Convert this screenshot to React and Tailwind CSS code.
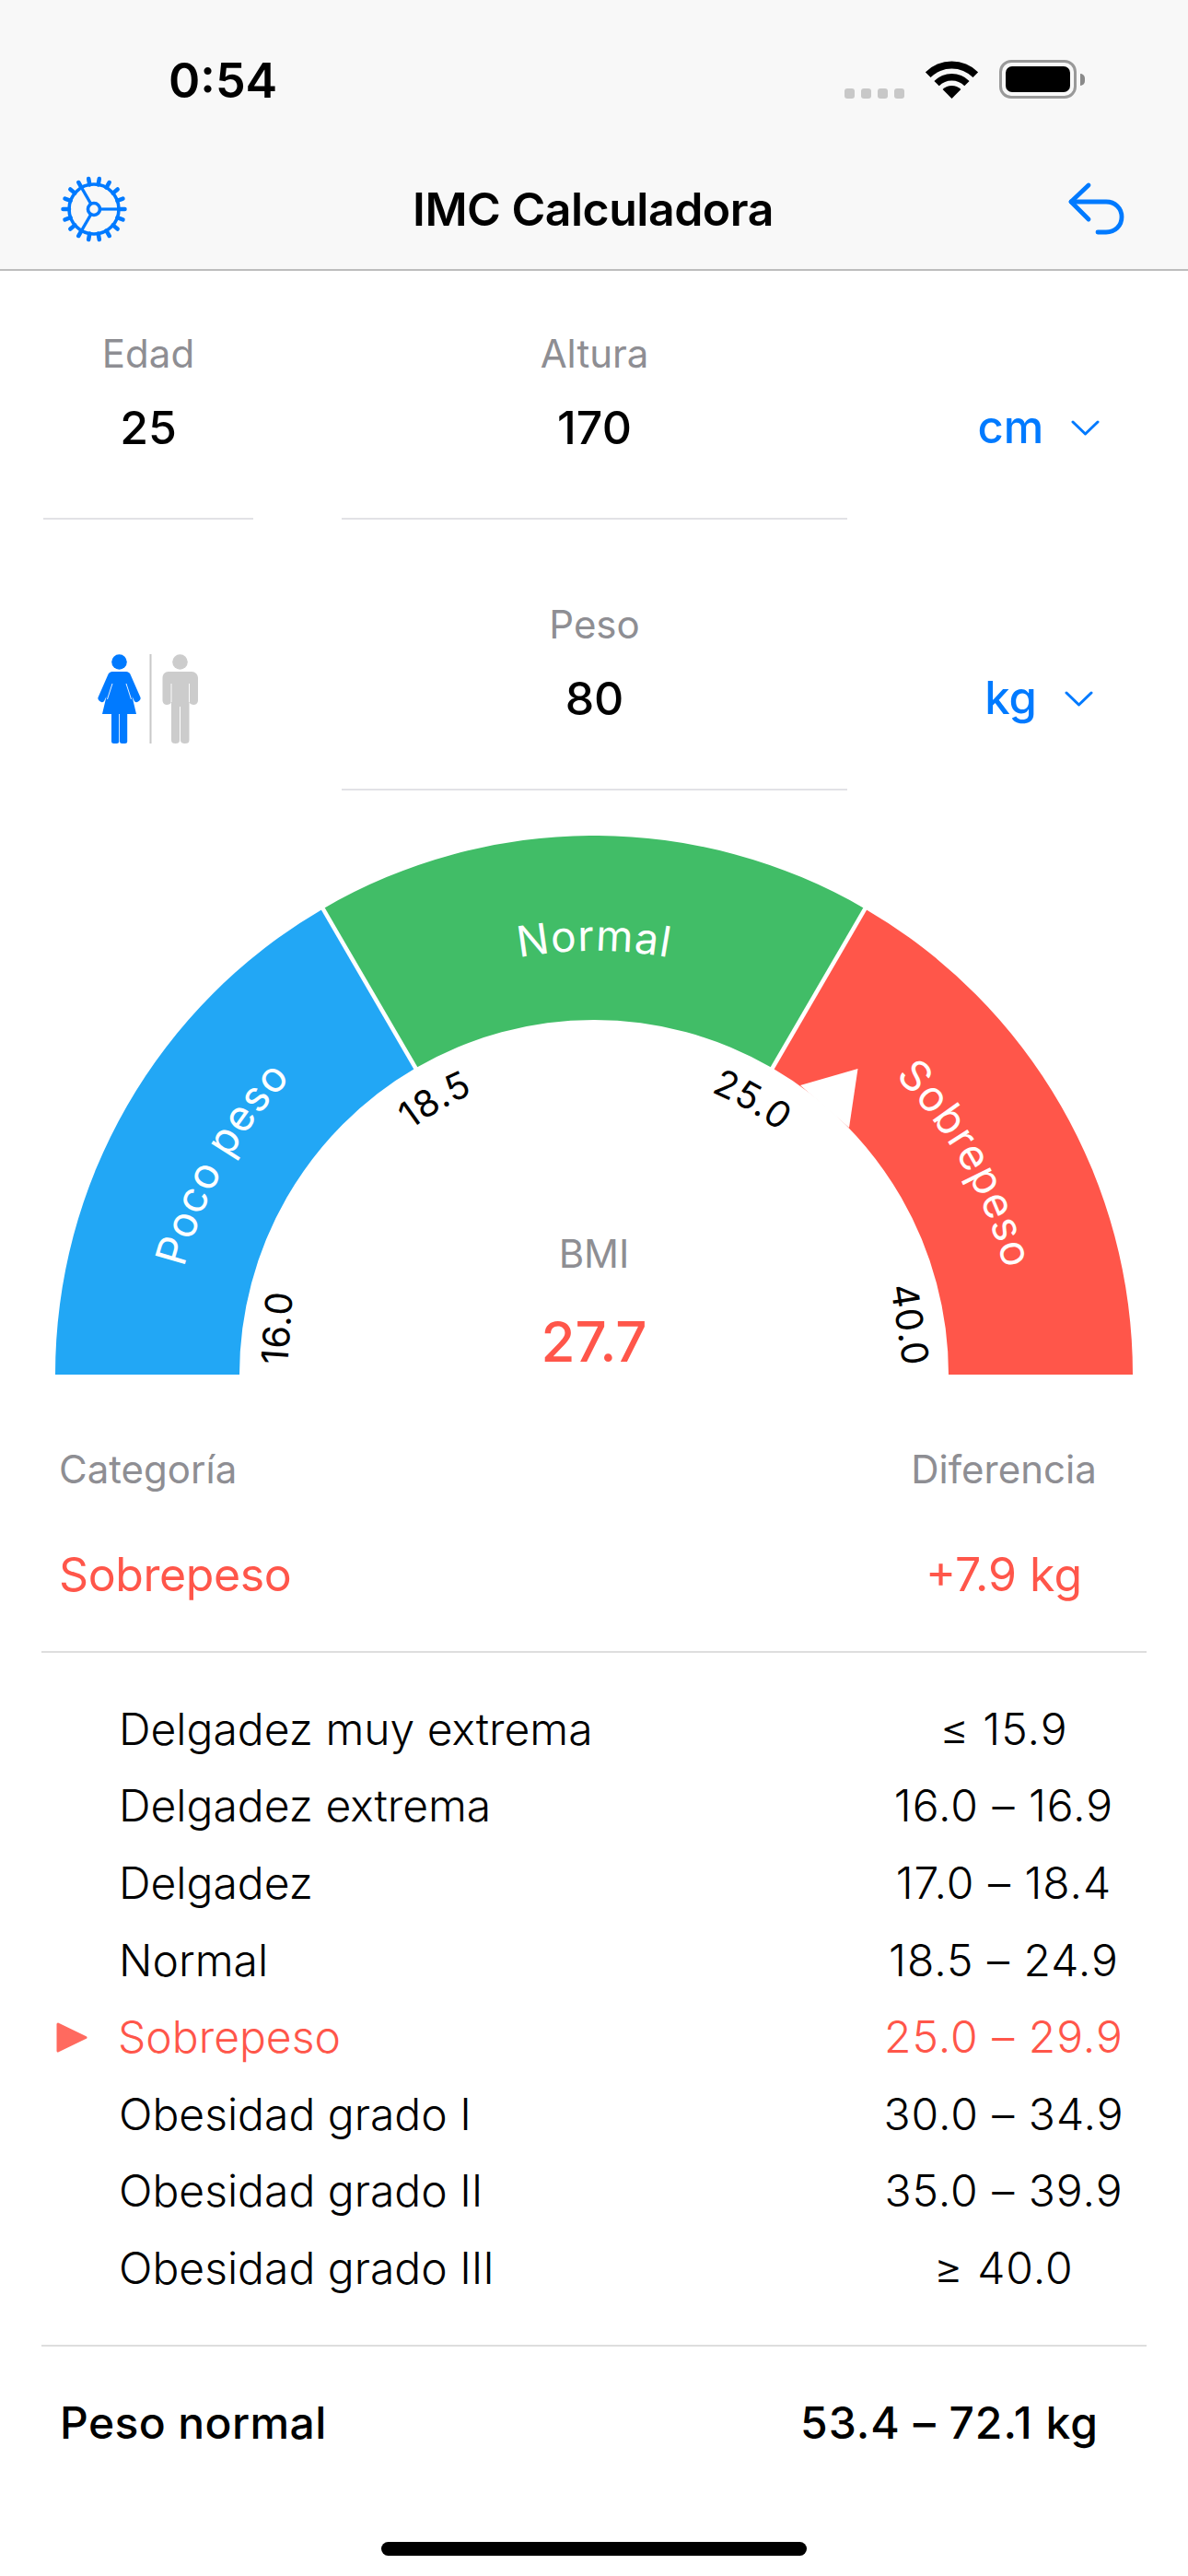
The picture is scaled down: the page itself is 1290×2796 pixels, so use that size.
import React from 'react';

const BLUE = '#007aff';

const ranges = [
  ['Delgadez muy extrema', '≤ 15.9'],
  ['Delgadez extrema', '16.0 – 16.9'],
  ['Delgadez', '17.0 – 18.4'],
  ['Normal', '18.5 – 24.9'],
  ['Sobrepeso', '25.0 – 29.9', true],
  ['Obesidad grado I', '30.0 – 34.9'],
  ['Obesidad grado II', '35.0 – 39.9'],
  ['Obesidad grado III', '≥ 40.0'],
];

// gauge geometry: center at 645,585 inside the svg
const CX = 645;
const CY = 585;
const pt = (r, deg) => {
  const a = (deg * Math.PI) / 180;
  return `${(CX + r * Math.sin(a)).toFixed(1)} ${(CY - r * Math.cos(a)).toFixed(1)}`;
};
const sector = (from, to) =>
  `M${pt(585, from)} A585 585 0 0 1 ${pt(585, to)} L${pt(385, to)} A385 385 0 0 0 ${pt(385, from)} Z`;
const arcPath = (r, from, to) => `M${pt(r, from)} A${r} ${r} 0 0 1 ${pt(r, to)}`;

const SettingsIcon = () => {
  const teeth = [];
  for (let i = 0; i < 18; i++) {
    teeth.push(
      <line key={i} x1="0" y1="-27" x2="0" y2="-33.5" strokeWidth="4.5" strokeLinecap="round" transform={`rotate(${i * 20 + 10})`} />
    );
  }
  return (
    <svg width="72" height="72" viewBox="-36 -36 72 72" fill="none" stroke={BLUE}>
      <circle r="27" strokeWidth="3.6" />
      {teeth}
      <circle r="6.5" strokeWidth="3.6" />
      <line x1="6.5" y1="0" x2="27" y2="0" strokeWidth="3.2" />
      <line x1="-3.2" y1="-5.6" x2="-13.5" y2="-23.4" strokeWidth="3.2" />
      <line x1="-3.2" y1="5.6" x2="-13.5" y2="23.4" strokeWidth="3.2" />
    </svg>
  );
};

const BackIcon = () => (
  <svg width="63" height="60" viewBox="0 0 63 60" fill="none" stroke={BLUE} strokeWidth="4.8" strokeLinecap="round" strokeLinejoin="round">
    <path d="M23 4 L4 22 L23 41" />
    <path d="M4 22 H42 C52 22 59 29 59 38.5 C59 48 52 55 42 55 H33" />
  </svg>
);

const wifiPt = (r, deg) => {
  const a = (deg * Math.PI) / 180;
  return `${(28.5 + r * Math.sin(a)).toFixed(2)} ${(42 - r * Math.cos(a)).toFixed(2)}`;
};
const wifiRing = (outer, inner) =>
  `M${wifiPt(outer, -45)} A${outer} ${outer} 0 0 1 ${wifiPt(outer, 45)} L${wifiPt(inner, 45)} A${inner} ${inner} 0 0 0 ${wifiPt(inner, -45)} Z`;

const Wifi = () => (
  <svg width="57" height="42" viewBox="0 0 57 42" fill="#000">
    <path d={wifiRing(40.5, 32.5)} />
    <path d={wifiRing(27, 19.5)} />
    <path d={`M28.5 42 L${wifiPt(14, -45)} A14 14 0 0 1 ${wifiPt(14, 45)} Z`} />
  </svg>
);

const Battery = () => (
  <div className="flex items-center">
    <div className="w-[84px] h-[42px] rounded-[13px] border-[3px] border-[#999999] p-[4px]">
      <div className="w-full h-full rounded-[7px] bg-black" />
    </div>
    <div className="w-[5px] h-[13px] ml-[4px] rounded-r-full bg-[#8a8a8a]" />
  </div>
);

const Figures = () => (
  <svg width="110" height="100" viewBox="0 0 110 100" className="block overflow-visible">
    <g fill={BLUE}>
      <circle cx="21.5" cy="8.5" r="8.3" />
      <path d="M14 19 H29 C31 19 33 20 34 23 L44.5 47 C45 49 44 50 42 51.5 C40 53 38 52 37.5 50 L35.5 46 L40 65 H3 L7.5 46 L5.5 50 C5 52 3 53 1 51.5 C-1 50 -2 49 -1.5 47 L9 23 C10 20 12 19 14 19 Z" />
      <rect x="13" y="63" width="8.2" height="34" rx="2.5" />
      <rect x="22" y="63" width="8.2" height="34" rx="2.5" />
    </g>
    <path d="M14 32 L8.5 49 M29 32 L34.5 49" stroke="#fff" strokeWidth="0.9" fill="none" />
    <rect x="54.5" y="0" width="2" height="97" fill="#c8c8c8" />
    <g fill="#cccccc">
      <circle cx="87.5" cy="8.5" r="8.3" />
      <path d="M75 19 H100 C104 19 107 22 107 26 V50 C107 53 105 55 102.5 55 C100 55 97.5 54 97.5 51 V93 C97.5 96 96 97 93 97 C90 97 88 96 88 93 V57 H87 V93 C87 96 85.5 97 82.5 97 C79.5 97 78 96 78 93 V51 C78 54 75.5 55 73 55 C70.5 55 68.5 53 68.5 50 V26 C68.5 22 71 19 75 19 Z" />
    </g>
    <path d="M78 32 V52 M97.5 32 V52" stroke="#fff" strokeWidth="0.9" fill="none" />
  </svg>
);

const Gauge = () => (
  <svg width="1290" height="586" viewBox="0 0 1290 586" className="block mt-[49px] shrink-0" style={{ fontFamily: 'Inter, sans-serif' }}>
    <defs>
      <path id="arcPoco" d={arcPath(460, -90, -31)} />
      <path id="arcNormal" d={arcPath(460, -30, 30)} />
      <path id="arcSobre" d={arcPath(460, 31, 90)} />
      <path id="arc18" d={arcPath(332, -50, -10)} />
      <path id="arc25" d={arcPath(332, 10, 50)} />
    </defs>
    <path d={sector(-90, -30.2)} fill="#22a7f5" />
    <path d={sector(-30.2, 30.2)} fill="#41bd67" />
    <path d={sector(30.2, 90)} fill="#ff564a" />
    <path d={`M${pt(587, -30.2)} L${pt(383, -30.2)}`} stroke="#fff" strokeWidth="4.5" />
    <path d={`M${pt(587, 30.2)} L${pt(383, 30.2)}`} stroke="#fff" strokeWidth="4.5" />
    {/* needle */}
    <polygon points="869,271 931.5,253 922,317" fill="#fff" />
    <g fill="#fff" fontSize="46" textAnchor="middle" letterSpacing="1">
      <text><textPath href="#arcPoco" startOffset="50%">Poco peso</textPath></text>
      <text><textPath href="#arcNormal" startOffset="50%">Normal</textPath></text>
      <text><textPath href="#arcSobre" startOffset="50%">Sobrepeso</textPath></text>
    </g>
    <g fill="#000" fontSize="40" textAnchor="middle" letterSpacing="1">
      <text transform="translate(315 535) rotate(-86)">16.0</text>
      <text><textPath href="#arc18" startOffset="50%">18.5</textPath></text>
      <text><textPath href="#arc25" startOffset="50%">25.0</textPath></text>
      <text transform="translate(974 533) rotate(81)">40.0</text>
    </g>
    <text x="645" y="469" fontSize="42" fill="#8e8e93" textAnchor="middle">BMI</text>
    <text x="645" y="571" fontSize="60" fontWeight="500" fill="#ff564a" textAnchor="middle">27.7</text>
  </svg>
);

function Field({ label, value, className }) {
  return (
    <div className={`${className} h-[203px] border-b-2 border-[#e2e2e6] flex flex-col items-center`}>
      <span className="text-[42px] leading-[46px] text-[#8e8e93]">{label}</span>
      <span className="mt-[27px] text-[50px] leading-[60px] font-medium">{value}</span>
    </div>
  );
}

function Unit({ label }) {
  return (
    <div className="ml-[46px] w-[324px] h-[60px] mt-[73px] flex items-center justify-center gap-[30px] text-[#007aff]">
      <span className="text-[49px] leading-[60px] font-medium">{label}</span>
      <svg width="31" height="17" viewBox="0 0 31 17" fill="none" stroke={BLUE} strokeWidth="3" strokeLinecap="round" strokeLinejoin="round">
        <path d="M2 2 L15.5 15 L29 2" />
      </svg>
    </div>
  );
}

export default function App() {
  return (
    <div className="w-[1290px] h-[2796px] bg-white text-black overflow-hidden flex flex-col font-['Inter',sans-serif]">
      <header className="h-[294px] shrink-0 bg-[#f8f8f8] border-b-2 border-[#bdbdbd] flex flex-col">
        <div className="h-[186px] shrink-0 flex items-start justify-between pt-[60px] pl-[183px] pr-[112px]">
          <span className="text-[52px] leading-[56px] font-semibold">0:54</span>
          <div className="flex items-end gap-[23px] mt-[5px]">
            <div className="flex gap-[7px]">
              <span className="w-[11px] h-[11px] rounded-[3px] bg-[#c8c8c8]" />
              <span className="w-[11px] h-[11px] rounded-[3px] bg-[#c8c8c8]" />
              <span className="w-[11px] h-[11px] rounded-[3px] bg-[#c8c8c8]" />
              <span className="w-[11px] h-[11px] rounded-[3px] bg-[#c8c8c8]" />
            </div>
            <Wifi />
            <Battery />
          </div>
        </div>
        <div className="flex-1 grid grid-cols-[1fr_auto_1fr] items-center pl-[66px] pr-[68px] pb-[24px]">
          <div className="justify-self-start"><SettingsIcon /></div>
          <h1 className="text-[50px] font-semibold leading-none tracking-[-0.5px]">IMC Calculadora</h1>
          <div className="justify-self-end"><BackIcon /></div>
        </div>
      </header>

      <section className="flex pt-[67px] h-[294px] shrink-0 pl-[47px]">
        <Field label="Edad" value="25" className="w-[228px]" />
        <Field label="Altura" value="170" className="w-[549px] ml-[96px]" />
        <Unit label="cm" />
      </section>
      <section className="flex pt-[67px] shrink-0 pl-[47px]">
        <div className="w-[228px] pl-[61px] pt-[55px]"><Figures /></div>
        <Field label="Peso" value="80" className="w-[549px] ml-[96px]" />
        <Unit label="kg" />
      </section>

      <Gauge />

      <section className="flex justify-between pl-[64px] pr-[50px] pt-[79px] shrink-0">
        <div className="flex flex-col">
          <span className="text-[42px] leading-[46px] text-[#8e8e93]">Categoría</span>
          <span className="mt-[61px] text-[50px] leading-[60px] tracking-[-0.4px] text-[#ff564a]">Sobrepeso</span>
        </div>
        <div className="w-[300px] flex flex-col items-center">
          <span className="text-[42px] leading-[46px] text-[#8e8e93]">Diferencia</span>
          <span className="mt-[61px] text-[50px] leading-[60px] text-[#ff564a]">+7.9 kg</span>
        </div>
      </section>

      <div className="mt-[53px] mx-[45px] h-[2px] shrink-0 bg-[#dedede]" />

      <ul className="mt-[41px] shrink-0 pl-[61px] pr-[50px]">
        {ranges.map(([name, range, active]) => (
          <li key={name} className={`h-[83.6px] flex items-center text-[48px] font-light ${active ? 'text-[#ff564a]' : 'text-black'}`}>
            <div className="w-[68px] shrink-0">
              {active && (
                <svg width="34" height="33" viewBox="0 0 34 33" className="block">
                  <path d="M2 2 L32 16.5 L2 31 Z" fill="#ff6a5f" stroke="#ff6a5f" strokeWidth="3" strokeLinejoin="round" />
                </svg>
              )}
            </div>
            <span className={`flex-1 ${active ? 'ml-[-1px]' : ''}`}>{name}</span>
            <span className="w-[300px] text-center tracking-[1px]">{range}</span>
          </li>
        ))}
      </ul>

      <div className="mt-[41px] mx-[45px] h-[2px] shrink-0 bg-[#dedede]" />

      <div className="mt-[53px] flex justify-between pl-[65px] pr-[97px] text-[48px] leading-[60px] font-medium shrink-0">
        <span className="tracking-[0.4px]">Peso normal</span>
        <span className="tracking-[1px]">53.4 – 72.1 kg</span>
      </div>

      <div className="mt-[99px] mx-auto w-[462px] h-[15px] rounded-full bg-black shrink-0" />
    </div>
  );
}
